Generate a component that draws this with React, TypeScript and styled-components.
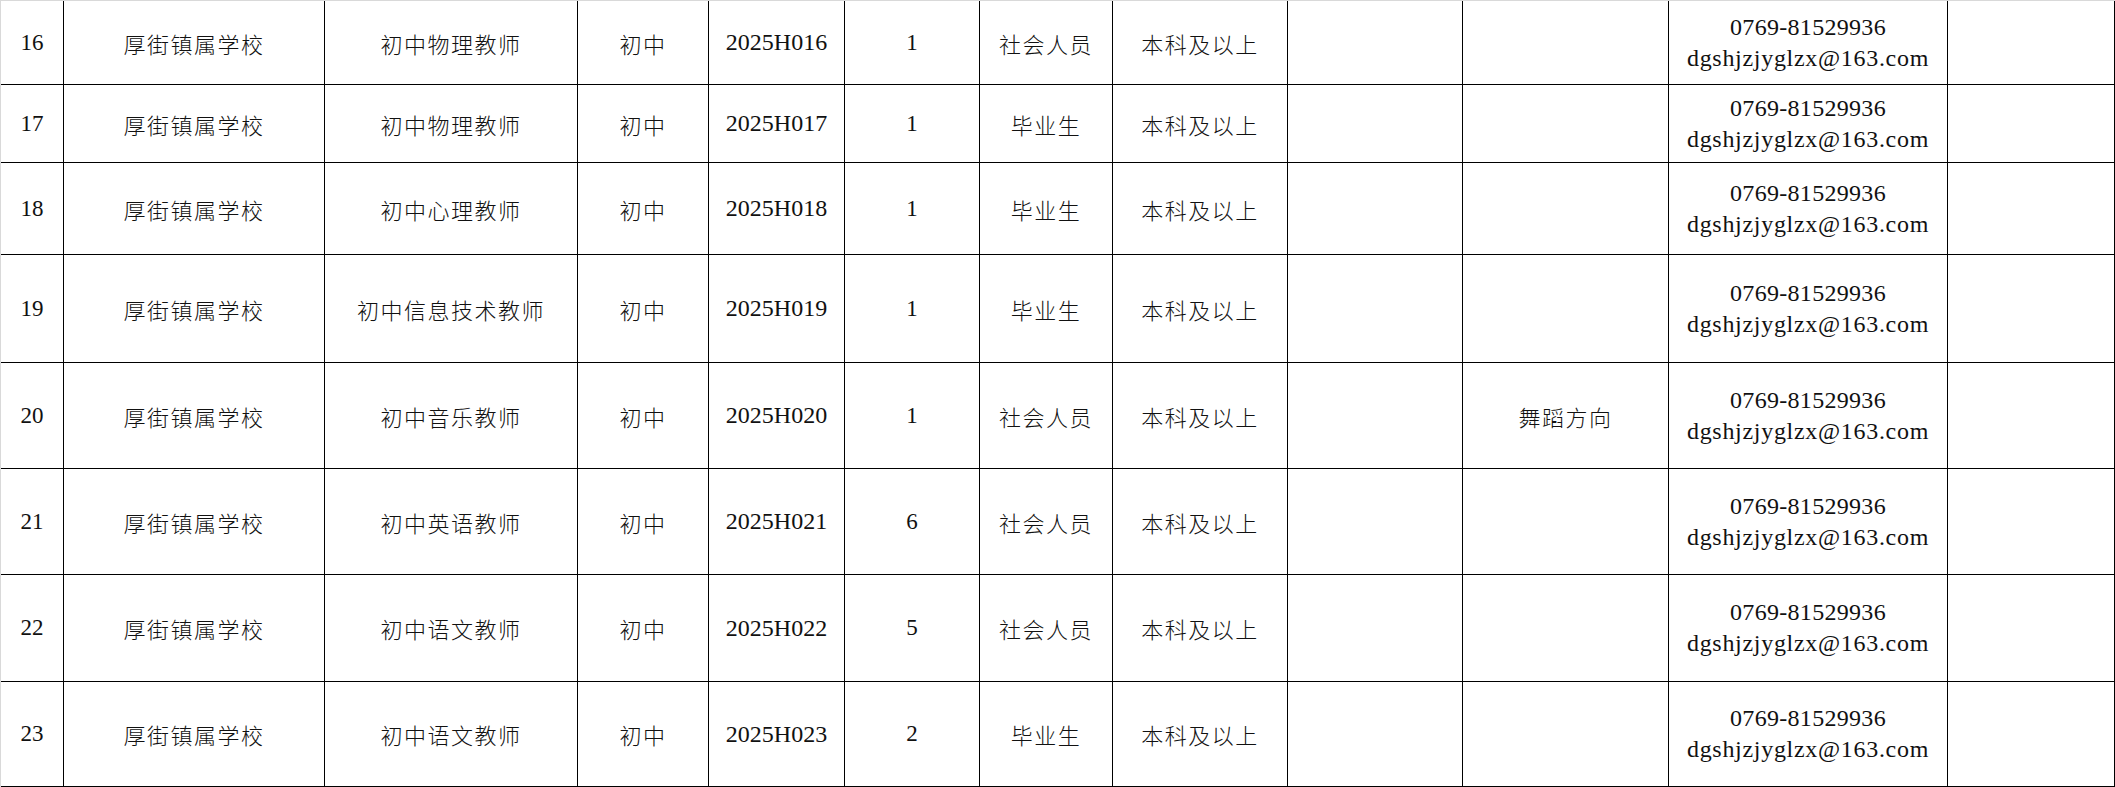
import styled, { createGlobalStyle } from "styled-components";

const GlobalStyle = createGlobalStyle`
  html, body {
    margin: 0;
    padding: 0;
    background: #d9d9d9;
  }
  body {
    overflow: hidden;
  }
`;

const COLS = [63, 261, 253, 131, 136, 135, 133, 175, 175, 206, 279, 167];
const ROW_HEIGHTS = [84, 78, 92, 108, 106, 106, 107, 105];

const Page = styled.div`
  padding: 1px 0 0 1px;
`;

const Sheet = styled.div<{ $rows: number[] }>`
  display: grid;
  grid-template-columns: ${COLS.map((w) => `${w}px`).join(" ")};
  grid-template-rows: ${(p) => p.$rows.map((h) => `${h}px`).join(" ")};
  width: 2114px;
  background: #fff;
`;

type Kind = "cjk" | "serif" | "code";

const Cell = styled.div<{ $kind?: Kind }>`
  box-sizing: border-box;
  border-right: 1px solid #000;
  border-bottom: 1px solid #000;
  display: flex;
  flex-direction: column;
  align-items: center;
  justify-content: center;
  text-align: center;
  color: #111;
  white-space: nowrap;
  font-family: ${(p) =>
    p.$kind === "cjk" || !p.$kind
      ? `"Noto Sans CJK SC", "Liberation Serif", sans-serif`
      : `"Liberation Serif", "Noto Sans CJK SC", serif`};
  font-size: ${(p) => (p.$kind === "code" ? "24px" : p.$kind === "serif" ? "23px" : "22px")};
  letter-spacing: ${(p) => (p.$kind === "cjk" || !p.$kind ? "1.5px" : "0")};
  font-weight: ${(p) => (p.$kind === "cjk" || !p.$kind ? 300 : 400)};
`;

const Line = styled.span<{ $spread?: number }>`
  display: block;
  line-height: 31px;
  letter-spacing: ${(p) => p.$spread ?? 0}px;
`;

type Row = {
  no: string;
  school: string;
  post: string;
  level: string;
  code: string;
  count: string;
  target: string;
  edu: string;
  note: string;
};

const rows: Row[] = [
  { no: "16", school: "厚街镇属学校", post: "初中物理教师", level: "初中", code: "2025H016", count: "1", target: "社会人员", edu: "本科及以上", note: "" },
  { no: "17", school: "厚街镇属学校", post: "初中物理教师", level: "初中", code: "2025H017", count: "1", target: "毕业生", edu: "本科及以上", note: "" },
  { no: "18", school: "厚街镇属学校", post: "初中心理教师", level: "初中", code: "2025H018", count: "1", target: "毕业生", edu: "本科及以上", note: "" },
  { no: "19", school: "厚街镇属学校", post: "初中信息技术教师", level: "初中", code: "2025H019", count: "1", target: "毕业生", edu: "本科及以上", note: "" },
  { no: "20", school: "厚街镇属学校", post: "初中音乐教师", level: "初中", code: "2025H020", count: "1", target: "社会人员", edu: "本科及以上", note: "舞蹈方向" },
  { no: "21", school: "厚街镇属学校", post: "初中英语教师", level: "初中", code: "2025H021", count: "6", target: "社会人员", edu: "本科及以上", note: "" },
  { no: "22", school: "厚街镇属学校", post: "初中语文教师", level: "初中", code: "2025H022", count: "5", target: "社会人员", edu: "本科及以上", note: "" },
  { no: "23", school: "厚街镇属学校", post: "初中语文教师", level: "初中", code: "2025H023", count: "2", target: "毕业生", edu: "本科及以上", note: "" },
];

export default function App() {
  return (
    <Page>
      <GlobalStyle />
      <Sheet $rows={ROW_HEIGHTS}>
        {rows.map((r) => [
          <Cell key={r.no + "a"} $kind="serif">{r.no}</Cell>,
          <Cell key={r.no + "b"} $kind="cjk">{r.school}</Cell>,
          <Cell key={r.no + "c"} $kind="cjk">{r.post}</Cell>,
          <Cell key={r.no + "d"} $kind="cjk">{r.level}</Cell>,
          <Cell key={r.no + "e"} $kind="code">{r.code}</Cell>,
          <Cell key={r.no + "f"} $kind="serif">{r.count}</Cell>,
          <Cell key={r.no + "g"} $kind="cjk">{r.target}</Cell>,
          <Cell key={r.no + "h"} $kind="cjk">{r.edu}</Cell>,
          <Cell key={r.no + "i"} $kind="cjk" />,
          <Cell key={r.no + "j"} $kind="cjk">{r.note}</Cell>,
          <Cell key={r.no + "k"} $kind="code">
            <Line $spread={0.3}>0769-81529936</Line>
            <Line $spread={0.7}>dgshjzjyglzx@163.com</Line>
          </Cell>,
          <Cell key={r.no + "l"} $kind="cjk" />,
        ])}
      </Sheet>
    </Page>
  );
}
